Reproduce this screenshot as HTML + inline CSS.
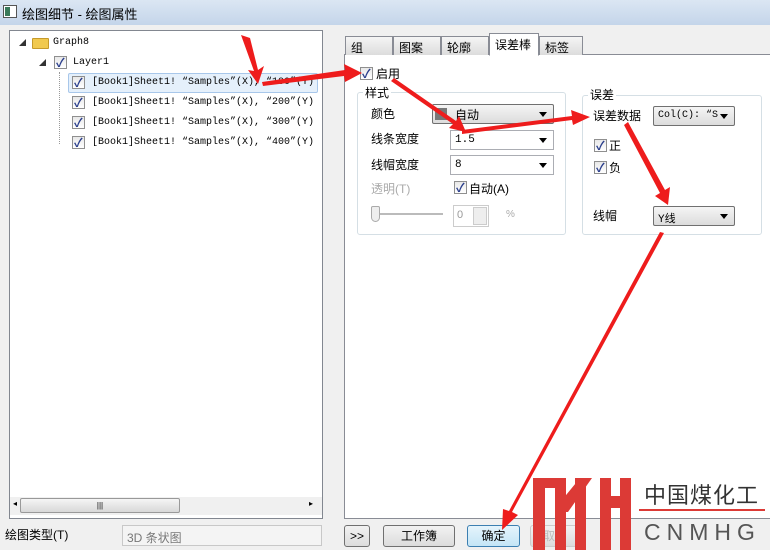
<!DOCTYPE html>
<html><head><meta charset="utf-8"><style>
*{box-sizing:border-box;margin:0;padding:0}
body{width:770px;height:550px;overflow:hidden;background:#f0f0f0;font-family:"Liberation Sans","Noto Sans CJK SC",sans-serif;font-size:12px;color:#000;position:relative}
.a{position:absolute}
.mono{font-family:"Liberation Mono","Noto Sans CJK SC",monospace;font-size:10px}
.cb{position:absolute;width:13px;height:13px;border:1px solid #8f8f8f;background:linear-gradient(#e8e8e8,#fff);}
.cb:after{content:"✓";position:absolute;left:1px;top:-3px;font-size:12px;color:#2a3e8c;font-weight:bold}
.dd{position:absolute;height:20px;border:1px solid #abadb3;background:#fff;font-size:11px;padding:3px 4px}
.dd:after{content:"";position:absolute;right:6px;top:7px;border:4px solid transparent;border-top:5px solid #000}
.btn{position:absolute;height:22px;border:1px solid #707070;border-radius:3px;background:linear-gradient(#f2f2f2,#dcdcdc);text-align:center;line-height:20px}
.tab{position:absolute;top:36px;height:19px;border:1px solid #898c95;border-bottom:none;background:linear-gradient(#f5f5f5,#dcdcdc);padding:2px 5px;font-size:12px}
.grp{position:absolute;border:1px solid #d5dfe5;border-radius:3px}
</style></head><body>
<div class="a" style="left:0;top:0;width:770px;height:25px;background:linear-gradient(#dbe6f3,#c4d5ea)"></div>
<div class="a" style="left:3px;top:5px;width:14px;height:13px;border:1px solid #555;background:#fff"><div style="width:5px;height:9px;background:#3a7a5a;margin:1px"></div></div>
<div class="a" style="left:22px;top:4px;font-size:13px">绘图细节 - 绘图属性</div>

<!-- left tree -->
<div class="a" style="left:9px;top:30px;width:314px;height:489px;border:1px solid #828790;background:#fff"></div>
<div class="a" style="left:19px;top:38px;font-size:7px;color:#333">◢</div>
<div class="a" style="left:32px;top:38px;width:17px;height:11px;background:#f1c94e;border:1px solid #c69a2a;border-radius:1px"></div>
<div class="a mono" style="left:53px;top:37px">Graph8</div>
<div class="a" style="left:39px;top:58px;font-size:7px;color:#333">◢</div>
<div class="cb" style="left:54px;top:56px"></div>
<div class="a mono" style="left:73px;top:57px">Layer1</div>
<div class="a" style="left:59px;top:72px;width:1px;height:72px;border-left:1px dotted #999"></div>
<div class="a" style="left:68px;top:73px;width:250px;height:20px;background:#e5f0fb;border:1px solid #a8c7ea;border-radius:2px"></div>
<div class="cb" style="left:72px;top:76px"></div><div class="a mono" style="left:92px;top:77px">[Book1]Sheet1! “Samples”(X), “100”(Y)</div>
<div class="cb" style="left:72px;top:96px"></div><div class="a mono" style="left:92px;top:97px">[Book1]Sheet1! “Samples”(X), “200”(Y)</div>
<div class="cb" style="left:72px;top:116px"></div><div class="a mono" style="left:92px;top:117px">[Book1]Sheet1! “Samples”(X), “300”(Y)</div>
<div class="cb" style="left:72px;top:136px"></div><div class="a mono" style="left:92px;top:137px">[Book1]Sheet1! “Samples”(X), “400”(Y)</div>
<div class="a" style="left:10px;top:497px;width:312px;height:18px;background:#f0f0f0"></div>
<div class="a" style="left:20px;top:498px;width:160px;height:15px;border:1px solid #999;border-radius:2px;background:linear-gradient(#f5f5f5,#d8d8d8);text-align:center;font-size:8px;line-height:13px">|||</div>
<div class="a" style="left:13px;top:499px;font-size:8px">◂</div><div class="a" style="left:309px;top:499px;font-size:8px">▸</div>
<div class="a" style="left:5px;top:526px;font-size:12px">绘图类型(T)</div>
<div class="a" style="left:122px;top:525px;width:200px;height:21px;border:1px solid #c8c8c8;background:#f4f4f4;color:#777;padding:3px 4px;font-size:12px">3D 条状图</div>

<!-- tabs -->
<div class="a" style="left:344px;top:54px;width:430px;height:465px;border:1px solid #898c95;background:#fff"></div>
<div class="tab" style="left:345px;width:48px">组</div>
<div class="tab" style="left:393px;width:48px">图案</div>
<div class="tab" style="left:441px;width:48px">轮廓</div>
<div class="tab" style="left:489px;top:33px;height:23px;width:50px;background:#fff;border-bottom:1px solid #fff">误差棒</div>
<div class="tab" style="left:539px;width:44px">标签</div>

<div class="cb" style="left:360px;top:67px"></div><div class="a" style="left:376px;top:65px">启用</div>
<div class="grp" style="left:357px;top:92px;width:209px;height:143px"></div>
<div class="a" style="left:363px;top:84px;background:#fff;padding:0 2px">样式</div>
<div class="a" style="left:371px;top:105px">颜色</div>
<div class="dd" style="left:432px;top:104px;width:122px;background:linear-gradient(#f5f5f5,#dcdcdc);border-color:#707070;border-radius:2px;font-size:12px;padding:1px 6px 1px 22px">自动<div style="position:absolute;left:2px;top:3px;width:12px;height:12px;background:#777"></div></div>
<div class="a" style="left:371px;top:130px">线条宽度</div>
<div class="dd mono" style="left:450px;top:130px;width:104px">1.5</div>
<div class="a" style="left:371px;top:156px">线帽宽度</div>
<div class="dd mono" style="left:450px;top:155px;width:104px">8</div>
<div class="a" style="left:371px;top:180px;color:#aaa">透明(T)</div>
<div class="cb" style="left:454px;top:181px"></div><div class="a" style="left:469px;top:180px">自动(A)</div>
<div class="a" style="left:376px;top:213px;width:67px;height:2px;background:#bbb"></div>
<div class="a" style="left:371px;top:206px;width:9px;height:16px;border:1px solid #aaa;border-radius:2px 2px 5px 5px;background:#eee"></div>
<div class="a" style="left:453px;top:205px;width:36px;height:22px;border:1px solid #ccc;color:#999;font-size:11px;padding:3px">0</div>
<div class="a" style="left:473px;top:207px;width:14px;height:18px;border:1px solid #ccc;background:#eee"></div>
<div class="a" style="left:506px;top:209px;color:#aaa;font-size:10px">%</div>

<div class="grp" style="left:582px;top:95px;width:180px;height:140px"></div>
<div class="a" style="left:588px;top:86px;background:#fff;padding:0 2px">误差</div>
<div class="a" style="left:593px;top:107px">误差数据</div>
<div class="dd mono" style="left:653px;top:106px;width:82px;background:linear-gradient(#f5f5f5,#dcdcdc);border-color:#707070;border-radius:2px;font-size:10px">Col(C): “S</div>
<div class="cb" style="left:594px;top:139px"></div><div class="a" style="left:609px;top:137px">正</div>
<div class="cb" style="left:594px;top:161px"></div><div class="a" style="left:609px;top:159px">负</div>
<div class="a" style="left:593px;top:207px">线帽</div>
<div class="dd mono" style="left:653px;top:206px;width:82px;background:linear-gradient(#f5f5f5,#dcdcdc);border-color:#707070;border-radius:2px">Y线</div>

<!-- bottom buttons -->
<div class="btn" style="left:344px;top:525px;width:26px">&gt;&gt;</div>
<div class="btn" style="left:383px;top:525px;width:72px">工作簿</div>
<div class="btn" style="left:467px;top:525px;width:53px;border-color:#3c7fb1;background:linear-gradient(#e5f4fc,#c4e5f6)">确定</div>
<div class="btn" style="left:530px;top:525px;width:50px;color:#bbb;border-color:#ccc">取消</div>

<!-- logo -->
<svg class="a" style="left:0;top:0" width="770" height="550">
<g fill="#dc3a36">
<rect x="533" y="478" width="12" height="72"/>
<rect x="533" y="478" width="30" height="10"/>
<rect x="555" y="478" width="11" height="72"/>
<polygon points="580,478 592,478 568,512 562,512 562,500"/>
<rect x="575" y="478" width="11" height="72"/>
<rect x="600" y="478" width="11" height="72"/>
<rect x="610" y="496" width="12" height="12"/>
<rect x="620" y="478" width="11" height="72"/>
<rect x="639" y="509" width="126" height="2"/>
</g>
<g fill="#ee1c1c">
<polygon points="262,82 345,70 344,64 362,73 345,82 344,76 263,86"/>
<polygon points="241,35 250,38 258,70 264,66 258,84 248,70 254,71"/>
<polygon points="394,78 456,121 459,116 466,132 449,128 453,124 391,81"/>
<polygon points="462,130 572,116 571,110 590,117 573,125 572,120 462,134"/>
<polygon points="628,122 665,190 670,187 668,205 655,196 660,193 624,125"/>
<polygon points="660,232 664,233 512,512 518,515 502,530 503,509 509,511"/>
</g>
<text x="644" y="503" font-size="22" fill="#333" font-family="Noto Sans CJK SC,sans-serif" letter-spacing="1">中国煤化工</text>
<text x="644" y="540" font-size="23" fill="#555" font-family="Liberation Sans,sans-serif" letter-spacing="6">CNMHG</text>
</svg>
</body></html>
